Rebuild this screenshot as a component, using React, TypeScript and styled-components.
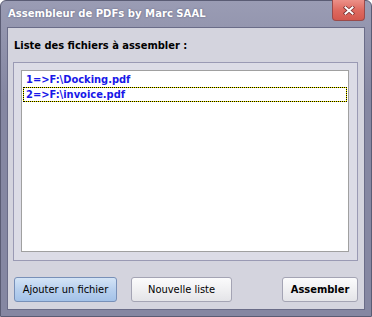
import React, { useState } from 'react'
import styled, { createGlobalStyle } from 'styled-components'

const GlobalStyle = createGlobalStyle`
  html, body {
    margin: 0;
    padding: 0;
    background: #ffffff;
  }
`

const Window = styled.div`
  width: 372px;
  height: 317px;
  box-sizing: border-box;
  display: flex;
  flex-direction: column;
  background: linear-gradient(to bottom, #9a9cb4 0%, #8587a2 30%, #8587a2 100%);
  border: 1px solid #5a5c74;
  border-radius: 6px 6px 0 0;
  font-family: 'DejaVu Sans Condensed', 'DejaVu Sans', sans-serif;
`

const TitleBar = styled.div`
  height: 26px;
  flex-shrink: 0;
  display: flex;
  align-items: flex-start;
  justify-content: space-between;
  padding: 0 6px 0 7px;
`

const Title = styled.span`
  margin-top: 6px;
  color: #ffffff;
  font-weight: bold;
  font-size: 11.2px;
  text-shadow: 0 0 2px #5a5c7a;
`

const CloseButton = styled.button`
  width: 33px;
  height: 21px;
  margin-top: -1px;
  padding: 0;
  display: flex;
  align-items: center;
  justify-content: center;
  border: 1px solid #9a4a4a;
  border-top: none;
  border-radius: 0 0 4px 4px;
  background: linear-gradient(to bottom, #ec9088 0%, #de6a60 50%, #d4584e 100%);
`

const Client = styled.div`
  flex: 1;
  margin: 0 6px 6px 6px;
  border: 1px solid #6a6c88;
  background: #d4d4de;
  display: flex;
  flex-direction: column;
  padding: 0 6px 0 5px;
`

const Label = styled.div`
  margin-top: 11px;
  height: 15px;
  padding-left: 1px;
  font-weight: bold;
  font-size: 11px;
  color: #000000;
`

const ListFrame = styled.div`
  margin-top: 8px;
  height: 199px;
  box-sizing: border-box;
  border: 1px solid #9a9ab4;
  background: #dcdce6;
  padding: 7px 8px 8px 7px;
  display: flex;
`

const ListBox = styled.ul`
  flex: 1;
  margin: 0;
  padding: 1px;
  list-style: none;
  background: #ffffff;
  border: 1px solid #a0a0a0;
`

const ListItem = styled.li<{ $focused: boolean }>`
  height: 15px;
  line-height: 13px;
  box-sizing: border-box;
  padding-left: 2px;
  color: #1818e8;
  font-weight: bold;
  font-size: 11px;
  white-space: pre;
  border: 1px dotted ${p => (p.$focused ? '#000000' : 'transparent')};
  background: ${p =>
    p.$focused
      ? 'linear-gradient(#ffffff, #ffffff) padding-box, #f4f000 border-box'
      : 'transparent'};
`

const ButtonRow = styled.div`
  margin-top: 16px;
  display: flex;
  align-items: center;
  padding-left: 1px;
`

const Button = styled.button<{ $primary?: boolean; $bold?: boolean }>`
  height: 25px;
  box-sizing: border-box;
  padding: 0;
  border-radius: 3px;
  font-family: 'DejaVu Sans Condensed', 'DejaVu Sans', sans-serif;
  font-size: 11px;
  font-weight: ${p => (p.$bold ? 'bold' : 'normal')};
  color: #000000;
  border: 1px solid ${p => (p.$primary ? '#7890b8' : '#a4a4b4')};
  background: ${p =>
    p.$primary
      ? 'linear-gradient(to bottom, #d4e4f6 0%, #b8d0ee 50%, #a4c2e8 100%)'
      : 'linear-gradient(to bottom, #fbfbfc 0%, #f0f0f2 50%, #e4e4e8 100%)'};
`

const AddButton = styled(Button)`
  width: 103px;
`

const NewButton = styled(Button)`
  width: 101px;
  margin-left: 14px;
`

const AssembleButton = styled(Button)`
  width: 76px;
  margin-left: auto;
`

const CloseIcon = () => (
  <svg width="12" height="9" viewBox="0 0 12 9">
    <path
      d="M2.5 1.5 L9.5 7.5 M9.5 1.5 L2.5 7.5"
      stroke="#7a3030"
      strokeWidth="3.6"
      strokeLinecap="square"
    />
    <path
      d="M2.5 1.5 L9.5 7.5 M9.5 1.5 L2.5 7.5"
      stroke="#ffffff"
      strokeWidth="2"
      strokeLinecap="square"
    />
  </svg>
)

const files = ['F:\\Docking.pdf', 'F:\\invoice.pdf']

const App = () => {
  const [focused] = useState(1)

  return (
    <>
      <GlobalStyle />
      <Window>
        <TitleBar>
          <Title>Assembleur de PDFs by Marc SAAL</Title>
          <CloseButton>
            <CloseIcon />
          </CloseButton>
        </TitleBar>
        <Client>
          <Label>Liste des fichiers à assembler :</Label>
          <ListFrame>
            <ListBox>
              {files.map((f, i) => (
                <ListItem key={f} $focused={i === focused}>
                  {`${i + 1}=>${f}`}
                </ListItem>
              ))}
            </ListBox>
          </ListFrame>
          <ButtonRow>
            <AddButton $primary>Ajouter un fichier</AddButton>
            <NewButton>Nouvelle liste</NewButton>
            <AssembleButton $bold>Assembler</AssembleButton>
          </ButtonRow>
        </Client>
      </Window>
    </>
  )
}

export default App
